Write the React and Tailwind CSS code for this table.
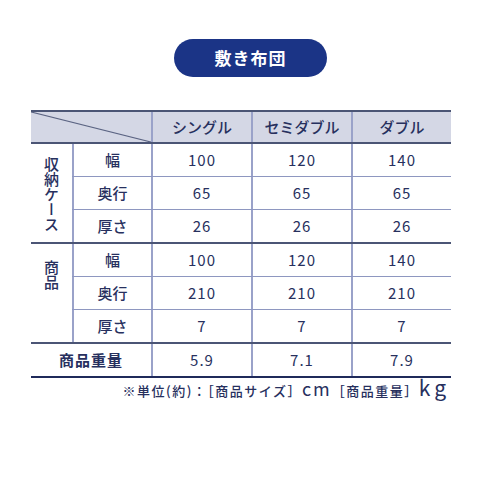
const rows1 = [
  { label: '幅', v: ['100', '120', '140'] },
  { label: '奥行', v: ['65', '65', '65'] },
  { label: '厚さ', v: ['26', '26', '26'] },
];

const rows2 = [
  { label: '幅', v: ['100', '120', '140'] },
  { label: '奥行', v: ['210', '210', '210'] },
  { label: '厚さ', v: ['7', '7', '7'] },
];

function ValueCells({ values }) {
  return values.map((v, i) => (
    <div key={i} className="w-[100px] flex items-center justify-center border-l-2 border-[#9aa2c9] text-[15px] tracking-[1px]">
      {v}
    </div>
  ));
}

function Group({ title, rows, pad }) {
  return (
    <div className="flex border-b-2 border-[#4b5575]">
      <div className={`w-[41px] flex justify-center ${pad}`}>
        <span className="[writing-mode:vertical-rl] text-[15px] font-medium leading-[41px]">{title}</span>
      </div>
      <div className="flex-1 flex flex-col">
        {rows.map((r, i) => (
          <div key={i} className={`flex ${i < rows.length - 1 ? 'border-b border-[#8e97c0] h-[33px]' : 'h-[32px]'}`}>
            <div className="w-[79px] flex items-center justify-center border-l-2 border-[#9aa2c9] text-[15px] font-medium">
              {r.label}
            </div>
            <ValueCells values={r.v} />
          </div>
        ))}
      </div>
    </div>
  );
}

export default function App() {
  return (
    <div className="w-[500px] h-[500px] bg-white text-[#27305e] font-['Noto_Sans_CJK_JP','Noto_Sans',sans-serif]">
      <div className="flex justify-center pt-[39px]">
        <div className="w-[153px] h-[38px] ml-[1px] rounded-full bg-[#1b3486] text-white text-[17px] font-bold flex items-center justify-center tracking-[1px]">
          敷き布団
        </div>
      </div>

      <div className="ml-[31px] mt-[33px] w-[420px]">
        {/* header */}
        <div className="flex h-[34px] bg-[#d4d7e5] border-t-2 border-b-2 border-[#4b5575]">
          <div className="relative w-[120px]">
            <svg className="absolute inset-0" width="120" height="30" viewBox="0 0 120 30">
              <line x1="0" y1="0" x2="120" y2="30" stroke="#5a6382" strokeWidth="1.2" />
            </svg>
          </div>
          {['シングル', 'セミダブル', 'ダブル'].map((h) => (
            <div key={h} className="w-[100px] flex items-center justify-center border-l-2 border-[#9aa2c9] text-[15px] font-medium">
              {h}
            </div>
          ))}
        </div>

        <Group title="収納ケース" rows={rows1} pad="pt-[13px]" />
        <Group title="商品" rows={rows2} pad="pt-[16px]" />

        {/* weight */}
        <div className="flex h-[34px] border-b-2 border-[#1f2a5a]">
          <div className="w-[120px] flex items-center justify-center text-[15px] font-bold tracking-[1px]">
            商品重量
          </div>
          <ValueCells values={['5.9', '7.1', '7.9']} />
        </div>

        <div className="flex justify-end items-baseline -mt-[2px] pr-[1px] text-[13px] font-medium tracking-[1.5px] leading-[22px]">
          <span>※単位(約)：［商品サイズ］</span>
          <span className="text-[18px] font-normal tracking-[2px]">cm</span>
          <span>［商品重量］</span>
          <span className="text-[21px] font-normal tracking-[4px]">kg</span>
        </div>
      </div>
    </div>
  );
}
